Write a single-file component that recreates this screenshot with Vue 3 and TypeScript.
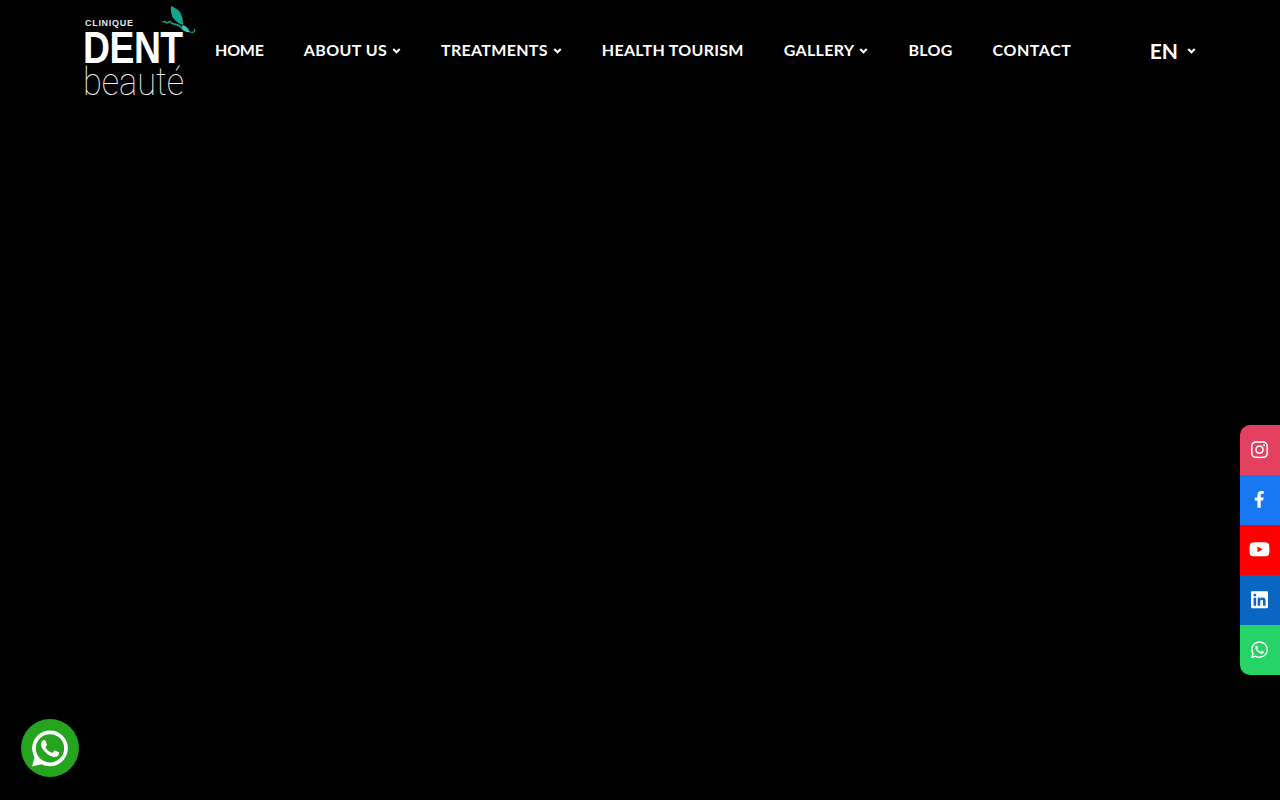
<script setup lang="ts">
interface NavItem { label: string; caret: boolean; spacing: number }
const nav: NavItem[] = [
  { label: 'HOME', caret: false, spacing: -0.2 },
  { label: 'ABOUT US', caret: true, spacing: 0.4 },
  { label: 'TREATMENTS', caret: true, spacing: 0.3 },
  { label: 'HEALTH TOURISM', caret: false, spacing: 0.3 },
  { label: 'GALLERY', caret: true, spacing: 0.3 },
  { label: 'BLOG', caret: false, spacing: 0.3 },
  { label: 'CONTACT', caret: false, spacing: 0.55 },
]
const waPath = 'M380.9 97.1C339 55.1 283.2 32 223.9 32c-122.4 0-222 99.6-222 222 0 39.1 10.2 77.3 29.6 111L0 480l117.7-30.9c32.4 17.7 68.9 27 106.1 27h.1c122.3 0 224.1-99.6 224.1-222 0-59.3-25.2-115-67.1-157zm-157 341.6c-33.2 0-65.7-8.9-94-25.7l-6.7-4-69.8 18.3L72 359.2l-4.4-7c-18.5-29.4-28.2-63.3-28.2-98.2 0-101.7 82.8-184.5 184.6-184.5 49.3 0 95.6 19.2 130.4 54.1 34.8 34.9 56.2 81.2 56.1 130.5 0 101.8-84.9 184.6-186.6 184.6zm101.2-138.2c-5.5-2.8-32.8-16.2-37.9-18-5.1-1.9-8.8-2.8-12.5 2.8-3.7 5.6-14.3 18-17.6 21.8-3.2 3.7-6.5 4.2-12 1.4-32.6-16.3-54-29.1-75.5-66-5.7-9.8 5.7-9.1 16.3-30.3 1.8-3.7.9-6.9-.5-9.7-1.4-2.8-12.5-30.1-17.1-41.2-4.5-10.8-9.1-9.3-12.5-9.5-3.2-.2-6.9-.2-10.6-.2-3.7 0-9.7 1.4-14.8 6.9-5.1 5.6-19.4 19-19.4 46.3 0 27.3 19.9 53.7 22.6 57.4 2.8 3.7 39.1 59.7 94.8 83.8 35.2 15.2 49 16.5 66.6 13.9 10.7-1.6 32.8-13.4 37.4-26.4 4.6-13 4.6-24.1 3.2-26.4-1.3-2.5-5-3.9-10.5-6.6z'
const handset = 'M325.1 300.5c-5.5-2.8-32.8-16.2-37.9-18-5.1-1.9-8.8-2.8-12.5 2.8-3.7 5.6-14.3 18-17.6 21.8-3.2 3.7-6.5 4.2-12 1.4-32.6-16.3-54-29.1-75.5-66-5.7-9.8 5.7-9.1 16.3-30.3 1.8-3.7.9-6.9-.5-9.7-1.4-2.8-12.5-30.1-17.1-41.2-4.5-10.8-9.1-9.3-12.5-9.5-3.2-.2-6.9-.2-10.6-.2-3.7 0-9.7 1.4-14.8 6.9-5.1 5.6-19.4 19-19.4 46.3 0 27.3 19.9 53.7 22.6 57.4 2.8 3.7 39.1 59.7 94.8 83.8 35.2 15.2 49 16.5 66.6 13.9 10.7-1.6 32.8-13.4 37.4-26.4 4.6-13 4.6-24.1 3.2-26.4-1.3-2.5-5-3.9-10.5-6.6z'
const socials = [
  { name: 'instagram', color: '#e4405f', box: '0 0 448 512', w: 17, h: 19.4, d: 'M224.1 141c-63.6 0-114.9 51.3-114.9 114.9s51.3 114.9 114.9 114.9S339 319.5 339 255.9 287.7 141 224.1 141zm0 189.6c-41.1 0-74.7-33.5-74.7-74.7s33.5-74.7 74.7-74.7 74.7 33.5 74.7 74.7-33.6 74.7-74.7 74.7zm146.4-194.3c0 14.9-12 26.8-26.8 26.8-14.9 0-26.8-12-26.8-26.8s12-26.8 26.8-26.8 26.8 12 26.8 26.8zm76.1 27.2c-1.7-35.9-9.9-67.7-36.2-93.9-26.2-26.2-58-34.4-93.9-36.2-37-2.1-147.9-2.1-184.9 0-35.8 1.7-67.6 9.9-93.9 36.1s-34.4 58-36.2 93.9c-2.1 37-2.1 147.9 0 184.9 1.7 35.9 9.9 67.7 36.2 93.9s58 34.4 93.9 36.2c37 2.1 147.9 2.1 184.9 0 35.9-1.7 67.7-9.9 93.9-36.2 26.2-26.2 34.4-58 36.2-93.9 2.1-37 2.1-147.8 0-184.8zM398.8 388c-7.8 19.6-22.9 34.7-42.6 42.6-29.5 11.7-99.5 9-132.1 9s-102.7 2.6-132.1-9c-19.6-7.8-34.7-22.9-42.6-42.6-11.7-29.5-9-99.5-9-132.1s-2.6-102.7 9-132.1c7.8-19.6 22.9-34.7 42.6-42.6 29.5-11.7 99.5-9 132.1-9s102.7-2.6 132.1 9c19.6 7.8 34.7 22.9 42.6 42.6 11.7 29.5 9 99.5 9 132.1s2.7 102.7-9 132.1z' },
  { name: 'facebook', color: '#1877f2', box: '0 0 320 512', w: 10.5, h: 16.8, d: 'M279.14 288l14.22-92.66h-88.91v-60.13c0-25.35 12.42-50.06 52.24-50.06h40.42V6.26S260.43 0 225.36 0c-73.22 0-121.08 44.38-121.08 124.72v70.62H22.89V288h81.39v224h100.17V288z' },
  { name: 'youtube', color: '#ff0000', box: '0 0 576 512', w: 21, h: 18.7, d: 'M549.655 124.083c-6.281-23.65-24.787-42.276-48.284-48.597C458.781 64 288 64 288 64S117.22 64 74.629 75.486c-23.497 6.322-42.003 24.947-48.284 48.597-11.412 42.867-11.412 132.305-11.412 132.305s0 89.438 11.412 132.305c6.281 23.65 24.787 41.5 48.284 47.821C117.22 448 288 448 288 448s170.78 0 213.371-11.486c23.497-6.321 42.003-24.171 48.284-47.821 11.412-42.867 11.412-132.305 11.412-132.305s0-89.438-11.412-132.305zm-317.51 213.508V175.185l142.739 81.205-142.739 81.201z' },
  { name: 'linkedin', color: '#0a66c2', box: '0 0 448 512', w: 17, h: 19.4, d: 'M416 32H31.9C14.3 32 0 46.5 0 64.3v383.4C0 465.5 14.3 480 31.9 480H416c17.6 0 32-14.5 32-32.3V64.3c0-17.8-14.4-32.3-32-32.3zM135.4 416H69V202.2h66.5V416zm-33.2-243c-21.3 0-38.5-17.3-38.5-38.5S80.9 96 102.2 96c21.2 0 38.5 17.3 38.5 38.5 0 21.3-17.2 38.5-38.5 38.5zm282.1 243h-66.4V312c0-24.8-.5-56.7-34.5-56.7-34.6 0-39.9 27-39.9 54.9V416h-66.4V202.2h63.7v29.2h.9c8.9-16.8 30.6-34.5 62.9-34.5 67.2 0 79.7 44.3 79.7 101.9V416z' },
  { name: 'whatsapp', color: '#25d366', box: '0 0 448 512', w: 17, h: 19.4, d: waPath },
]
</script>

<template>
  <div class="page">
    <header class="header">
      <a class="logo">
        <span class="clinique">CLINIQUE</span>
        <span class="dent">DENT</span>
        <span class="beaute">beauté</span>
        <svg class="butterfly" viewBox="0 0 34 30" width="34" height="30" fill="none">
          <path d="M9 0C12 1 15 3 17 5C20 8 21 13 21 19C17 18 12 14 10 10C9 7 8.5 3 9 0Z" fill="#10a58f" />
          <path d="M21 19C24 20 27 23 28 26C25 27 21 25 19 22Z" fill="#43bfae" />
          <path d="M0.5 16.5q2-2 3-.5q1.5 1.5 3 0q1.5-1.5 3 1q3 1.5 5 1.5q3 1 6 4" stroke="#10a58f" stroke-width="1.5" />
          <path d="M28 26q3 1 4.5-.5q1-1.5-.5-2.5" stroke="#10a58f" stroke-width="1.2" />
        </svg>
      </a>
      <nav class="nav">
        <a v-for="item in nav" :key="item.label" class="nav-link" :style="{ letterSpacing: item.spacing + 'px' }">
          {{ item.label }}
          <svg v-if="item.caret" class="caret" viewBox="0 0 10 7" width="9" height="6" fill="none">
            <path d="M1.2 1.2L5 5L8.8 1.2" stroke="#fff" stroke-width="2.4" />
          </svg>
        </a>
      </nav>
      <div class="lang">
        EN
        <svg class="caret" viewBox="0 0 10 7" width="9" height="6" fill="none">
          <path d="M1.2 1.2L5 5L8.8 1.2" stroke="#fff" stroke-width="2.4" />
        </svg>
      </div>
    </header>

    <aside class="socials">
      <a v-for="s in socials" :key="s.name" class="social" :style="{ background: s.color }">
        <svg :viewBox="s.box" :width="s.w" :height="s.h" fill="#fff"><path :d="s.d" /></svg>
      </a>
    </aside>

    <a class="wa-float">
      <svg viewBox="0 0 448 512" width="36" height="41" fill="#fff">
        <circle cx="224" cy="254" r="200" fill="none" stroke="#fff" stroke-width="46" />
        <path d="M0 480L35 345L130 448Z" />
        <path :d="handset" />
      </svg>
    </a>
  </div>
</template>

<style>
html, body { margin: 0; background: #000; }
</style>

<style scoped>
.page {
  min-height: 800px;
  background: #000;
  color: #fff;
  font-family: "Lato", "Liberation Sans", sans-serif;
}
.header {
  display: flex;
  align-items: flex-start;
  padding: 0 84px 0 85px;
  height: 101px;
}
.logo {
  position: relative;
  display: flex;
  flex-direction: column;
  width: 110px;
  height: 101px;
  flex: none;
  font-family: "Liberation Sans", Arial, sans-serif;
}
.clinique {
  margin-top: 18px;
  font-size: 9px;
  line-height: 11px;
  font-weight: 700;
  letter-spacing: 0.7px;
  color: #e6e6e6;
}
.dent {
  font-size: 45px;
  line-height: 38px;
  font-weight: 700;
  letter-spacing: -0.6px;
  margin-left: -2px;
  transform: scaleX(0.83);
  transform-origin: left center;
  white-space: nowrap;
}
.beaute {
  margin-top: -3px;
  margin-left: -2px;
  font-family: "Roboto", "Liberation Sans", sans-serif;
  font-size: 39px;
  line-height: 36px;
  font-weight: 100;
  color: #f0f0f0;
  transform: scaleX(0.88);
  transform-origin: left center;
  white-space: nowrap;
}
.butterfly {
  position: absolute;
  left: 77px;
  top: 6px;
}
.nav {
  display: flex;
  align-items: center;
  gap: 40px;
  height: 99px;
  margin-left: 20px;
}
.nav-link {
  display: flex;
  align-items: center;
  gap: 5px;
  font-size: 16px;
  font-weight: 700;
  white-space: nowrap;
}
.nav-link .caret {
  margin-top: 2px;
}
.lang {
  display: flex;
  align-items: center;
  gap: 9px;
  height: 101px;
  margin-left: auto;
  font-size: 21px;
  font-weight: 700;
}
.caret { flex: none; }
.socials {
  position: fixed;
  right: 0;
  top: 425px;
  display: flex;
  flex-direction: column;
  width: 40px;
  border-radius: 10px 0 0 10px;
  overflow: hidden;
}
.social {
  display: flex;
  align-items: center;
  justify-content: center;
  box-sizing: border-box;
  height: 50px;
  padding: 0 1px 1px 0;
}
.wa-float {
  position: fixed;
  left: 21px;
  top: 719px;
  display: flex;
  align-items: center;
  justify-content: center;
  width: 58px;
  height: 58px;
  border-radius: 50%;
  background: #25a41f;
}
</style>
